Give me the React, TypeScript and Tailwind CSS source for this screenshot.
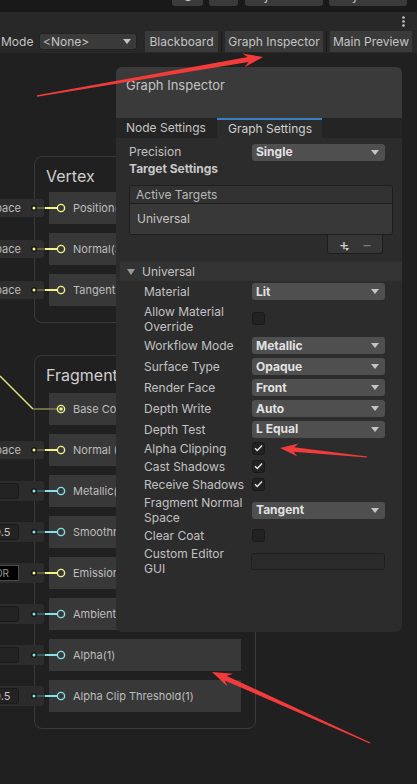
import React from "react";

type Kind = "space" | "num" | "color" | "edge";

interface Port {
  label: string;
  cyan?: boolean;
  kind: Kind;
  field?: string;
}

const vertexPorts: Port[] = [
  { label: "Position(3)", kind: "space", field: "Object Space" },
  { label: "Normal(3)", kind: "space", field: "Object Space" },
  { label: "Tangent(3)", kind: "space", field: "Object Space" },
];

const fragmentPorts: Port[] = [
  { label: "Base Color(3)", kind: "edge" },
  { label: "Normal (Tangent Space)(3)", kind: "space", field: "Tangent Space" },
  { label: "Metallic(1)", cyan: true, kind: "num", field: "0" },
  { label: "Smoothness(1)", cyan: true, kind: "num", field: "0.5" },
  { label: "Emission(3)", kind: "color", field: "HDR COLOR" },
  { label: "Ambient Occlusion(1)", cyan: true, kind: "num", field: "1" },
  { label: "Alpha(1)", cyan: true, kind: "num", field: "1" },
  { label: "Alpha Clip Threshold(1)", cyan: true, kind: "num", field: "0.5" },
];

// wire + port circle, drawn in page x coords (svg starts at x 0)
function Connector({ port }: { port: Port }) {
  const col = port.cyan ? "#86e3e6" : "#f3f38b";
  const dim = port.cyan ? "#3d5a5b" : "#5e5e45";
  if (port.kind === "edge") {
    return (
      <svg className="absolute left-[-49px] top-0 overflow-visible" width="70" height="32">
        <line x1="0" y1="-17" x2="33" y2="16" stroke="#e4e47e" strokeWidth="1.4" />
        <line x1="33" y1="16" x2="57.5" y2="16" stroke="#6c6c4d" strokeWidth="2" />
        <circle cx="61" cy="16" r="3.6" fill="none" stroke={col} strokeWidth="1.4" />
        <circle cx="61" cy="16" r="1.8" fill={col} />
      </svg>
    );
  }
  return (
    <svg className="absolute left-[-49px] top-0 overflow-visible" width="70" height="32">
      <line x1="37" y1="16" x2="45" y2="16" stroke={dim} strokeWidth="2" />
      <line x1="45" y1="16" x2="57.5" y2="16" stroke={col} strokeWidth="2" />
      <circle cx="34" cy="16" r="2.3" fill={col} stroke="#1b1b1b" strokeWidth="1.6" />
      <circle cx="61" cy="16" r="3.6" fill="none" stroke={col} strokeWidth="1.4" />
    </svg>
  );
}

function PortRow({ port }: { port: Port }) {
  const numPad = port.field === "0.5" ? "pl-[23px]" : "pl-[18px]";
  return (
    <div className="relative flex h-[32px] w-[192px] shrink-0 items-center bg-[#383838] pl-[24px] text-[11px] text-[#bdbdbd]">
      {port.kind === "space" && (
        <div className="absolute left-[-89px] top-[7px] flex h-[18px] w-[84px] items-center justify-end whitespace-nowrap rounded-[3px] bg-[#2e2e2e] pr-[23px] text-[11px] text-[#bdbdbd]">
          {port.field}
        </div>
      )}
      {port.kind === "num" && (
        <div className="absolute left-[-89px] top-[6px] h-[20px] w-[84px] rounded-[3px] bg-[#2c2c2c]">
          <div
            className={`absolute left-[10px] top-[2px] flex h-[16px] w-[49px] items-center rounded-[3px] border border-[#1a1a1a] bg-[#232323] text-[11px] text-[#c4c4c4] ${numPad}`}
          >
            {port.field}
          </div>
        </div>
      )}
      {port.kind === "color" && (
        <div className="absolute left-[-89px] top-[6px] h-[20px] w-[84px] rounded-[3px] bg-[#2c2c2c]">
          <div className="absolute left-[10px] top-[2px] flex h-[16px] w-[49px] items-center justify-end overflow-hidden whitespace-nowrap border border-[#4a4a4a] bg-black pr-[9px] text-[10px] text-[#9a9a9a]">
            {port.field}
          </div>
        </div>
      )}
      <Connector port={port} />
      <span className="relative whitespace-nowrap">{port.label}</span>
    </div>
  );
}

function NodeFrame({
  title,
  ports,
  frameClass,
  listClass,
}: {
  title: string;
  ports: Port[];
  frameClass: string;
  listClass: string;
}) {
  return (
    <div className={frameClass}>
      <div className="pl-[11px] pt-[9px] text-[16px] leading-[20px] text-[#cfcfcf]">{title}</div>
      <div className={listClass}>
        {ports.map((p) => (
          <PortRow key={p.label} port={p} />
        ))}
      </div>
    </div>
  );
}

function Dropdown({ value }: { value: string }) {
  return (
    <div className="flex h-[17px] w-[133px] items-center justify-between rounded-[3px] bg-[#4f4f4f] pl-[4px] pr-[6px] text-[12px] font-bold text-[#e2e2e2]">
      <span>{value}</span>
      <svg width="8" height="5" viewBox="0 0 8 5">
        <path d="M0 0h8L4 5z" fill="#c4c4c4" />
      </svg>
    </div>
  );
}

function Check({ on }: { on?: boolean }) {
  return (
    <div className="flex h-[13px] w-[13px] items-center justify-center rounded-[3px] border border-[#191919] bg-[#222222]">
      {on && (
        <svg width="9" height="8" viewBox="0 0 9 8">
          <path d="M1 4.2 3.3 6.5 8 1.5" fill="none" stroke="#e6e6e6" strokeWidth="1.4" />
        </svg>
      )}
    </div>
  );
}

function Row({ label, h, children }: { label: React.ReactNode; h: string; children?: React.ReactNode }) {
  return (
    <div className={h}>
      <div className="flex h-full items-center pl-[28px]">
        <div className="w-[108px] shrink-0 whitespace-nowrap text-[12px] leading-[15px] text-[#c2c2c2]">{label}</div>
        {children}
      </div>
    </div>
  );
}

function GraphInspector() {
  return (
    <div className="absolute left-[116px] top-[67px] flex h-[565px] w-[286px] flex-col overflow-hidden rounded-[6px] bg-[#2c2c2c]">
      <div className="h-[51px] shrink-0 bg-[#3a3a3a] pl-[10px] pt-[10px] text-[13px] leading-[16px] text-[#c4c4c4]">
        Graph Inspector
      </div>

      {/* tabs */}
      <div className="flex h-[20px] shrink-0 bg-[#242424] text-[12px]">
        <div className="w-[101px] pl-[10px] leading-[20px] text-[#c4c4c4]">Node Settings</div>
        <div className="w-[105px] border-t-2 border-[#3d7fc4] bg-[#2c2c2c] pl-[11px] leading-[18px] text-[#d0d0d0]">
          Graph Settings
        </div>
      </div>

      <div className="flex flex-col pl-[13px]">
        <div className="mt-[5px] flex h-[18px] items-center">
          <div className="w-[123px] text-[12px] text-[#c2c2c2]">Precision</div>
          <Dropdown value="Single" />
        </div>
        <div className="h-[16px] text-[12px] font-bold leading-[16px] text-[#c8c8c8]">Target Settings</div>

        {/* active targets list */}
        <div className="mt-[8px] w-[264px] overflow-hidden rounded-[3px] border border-[#1e1e1e]">
          <div className="h-[18px] border-b border-[#1e1e1e] bg-[#323232] pl-[6px] text-[12px] leading-[17px] text-[#b8b8b8]">
            Active Targets
          </div>
          <div className="flex h-[30px] items-center bg-[#383838] pl-[7px] text-[12px] text-[#c4c4c4]">Universal</div>
        </div>
        <div className="ml-[198px] flex h-[19px] w-[56px] items-center gap-[13px] rounded-b-[3px] border border-t-0 border-[#1e1e1e] bg-[#363636] pl-[11px]">
          <span className="relative text-[15px] leading-[15px] text-[#d0d0d0]">
            +
            <svg className="absolute left-[6px] top-[11px]" width="4" height="3" viewBox="0 0 4 3">
              <path d="M0 0h4L2 3z" fill="#d0d0d0" />
            </svg>
          </span>
          <span className="text-[15px] leading-[15px] text-[#7c7c7c]">−</span>
        </div>
      </div>

      {/* Universal foldout */}
      <div className="ml-[4px] mt-[8px] flex h-[19px] shrink-0 items-center gap-[7px] bg-[#333333] pl-[7px] text-[12px] text-[#c4c4c4]">
        <svg width="8" height="6" viewBox="0 0 8 6">
          <path d="M0 0h8L4 6z" fill="#9a9a9a" />
        </svg>
        Universal
      </div>

      <Row label="Material" h="h-[21px]">
        <Dropdown value="Lit" />
      </Row>
      <Row
        label={
          <>
            Allow Material
            <br />
            Override
          </>
        }
        h="h-[33px]"
      >
        <Check />
      </Row>
      <Row label="Workflow Mode" h="h-[21px]">
        <Dropdown value="Metallic" />
      </Row>
      <Row label="Surface Type" h="h-[21px]">
        <Dropdown value="Opaque" />
      </Row>
      <Row label="Render Face" h="h-[21px]">
        <Dropdown value="Front" />
      </Row>
      <Row label="Depth Write" h="h-[21px]">
        <Dropdown value="Auto" />
      </Row>
      <Row label="Depth Test" h="h-[20px]">
        <Dropdown value="L Equal" />
      </Row>
      <Row label="Alpha Clipping" h="h-[18px]">
        <Check on />
      </Row>
      <Row label="Cast Shadows" h="h-[18px]">
        <Check on />
      </Row>
      <Row label="Receive Shadows" h="h-[18px]">
        <Check on />
      </Row>
      <Row
        label={
          <>
            Fragment Normal
            <br />
            Space
          </>
        }
        h="h-[34px]"
      >
        <Dropdown value="Tangent" />
      </Row>
      <Row label="Clear Coat" h="h-[17px]">
        <Check />
      </Row>
      <Row
        label={
          <>
            Custom Editor
            <br />
            GUI
          </>
        }
        h="h-[34px]"
      >
        <div className="-ml-[1px] h-[17px] w-[134px] rounded-[3px] border border-[#1f1f1f] bg-[#2a2a2a]" />
      </Row>
    </div>
  );
}

function Arrows() {
  return (
    <svg className="pointer-events-none absolute left-0 top-0" width="417" height="784" viewBox="0 0 417 784">
      <polygon
        fill="#f23b3b"
        points="36.9,95.3 247.8,57.1 242.1,53.5 263,57 244.5,67.3 248.6,62 37.1,96.7"
      />
      <polygon
        fill="#f23b3b"
        points="367.1,456.4 294.2,447.2 298.6,443.4 280,448 297.2,456.3 293.7,451.7 366.9,457.6"
      />
      <polygon
        fill="#f23b3b"
        points="370.3,742.5 226.7,675.9 233.1,673.8 212,672 227.4,686.6 224.7,680.4 369.7,743.6"
      />
    </svg>
  );
}

export default function App() {
  return (
    <div className="relative h-[784px] w-[417px] overflow-hidden bg-[#202020] font-[family-name:Inter] text-[#c4c4c4]">
      {/* scene view toolbar, cut off at the top */}
      <div className="flex h-[12px] items-start bg-[#191919] pl-[172px] text-[12px]">
        <div className="-mt-[12px] flex h-[18px] w-[31px] justify-center rounded-[3px] bg-[#3a3a3a]">
          <svg className="mt-[4px]" width="12" height="12" viewBox="0 0 12 12">
            <circle cx="6" cy="4" r="4.5" fill="none" stroke="#c4c4c4" strokeWidth="1.3" />
          </svg>
        </div>
        <div className="-mt-[12px] ml-[6px] flex h-[18px] w-[29px] justify-center rounded-[3px] bg-[#3a3a3a]">
          <svg className="mt-[4px]" width="12" height="12" viewBox="0 0 12 12">
            <path d="M3 3 6.5 7.5" stroke="#c4c4c4" strokeWidth="1.5" />
          </svg>
        </div>
        <div className="-mt-[12px] ml-[7px] h-[18px] w-[78px] rounded-[3px] bg-[#3a3a3a] pl-[5px] leading-[15px]">Layers</div>
        <div className="-mt-[12px] ml-[6px] h-[18px] w-[78px] rounded-[3px] bg-[#3a3a3a] pl-[5px] leading-[15px]">2 by 3</div>
      </div>

      {/* shader graph toolbar */}
      <div className="flex h-[18px] justify-end bg-[#282828] pr-[12px] pt-[4px]">
        <svg width="3" height="11" viewBox="0 0 3 11">
          <circle cx="1.5" cy="1.5" r="1.3" fill="#c4c4c4" />
          <circle cx="1.5" cy="5.5" r="1.3" fill="#c4c4c4" />
          <circle cx="1.5" cy="9.5" r="1.3" fill="#c4c4c4" />
        </svg>
      </div>
      <div className="flex h-[23px] items-center bg-[#282828] text-[12px] text-[#c4c4c4]">
        <span className="w-[39px] pl-[1px]">Mode</span>
        <div className="flex h-[17px] w-[98px] items-center justify-between rounded-[3px] border border-[#232323] bg-[#3a3a3a] pl-[3px] pr-[5px]">
          <span>&lt;None&gt;</span>
          <svg width="8" height="5" viewBox="0 0 8 5">
            <path d="M0 0h8L4 5z" fill="#c4c4c4" />
          </svg>
        </div>
        <div className="ml-[8px] flex h-[21px] w-[73px] items-center justify-center bg-[#3a3a3a]">Blackboard</div>
        <div className="mx-[3px] h-[21px] w-px bg-[#1a1a1a]" />
        <div className="flex h-[21px] w-[98px] items-center justify-center bg-[#3a3a3a]">Graph Inspector</div>
        <div className="mx-[3px] h-[21px] w-px bg-[#1a1a1a]" />
        <div className="flex h-[21px] w-[82px] items-center justify-center bg-[#3a3a3a]">Main Preview</div>
      </div>

      {/* graph canvas: master stack nodes */}
      <NodeFrame
        title="Vertex"
        ports={vertexPorts}
        frameClass="absolute left-[34px] top-[156px] w-[222px] rounded-[8px] border border-[#3a3a3a] pb-[16px]"
        listClass="ml-[14px] mt-[6px] flex flex-col gap-[9px]"
      />
      <NodeFrame
        title="Fragment"
        ports={fragmentPorts}
        frameClass="absolute left-[34px] top-[355px] w-[222px] rounded-[8px] border border-[#3a3a3a] pb-[16px]"
        listClass="ml-[14px] mt-[8px] flex flex-col gap-[9px]"
      />

      <GraphInspector />
      <Arrows />
    </div>
  );
}
